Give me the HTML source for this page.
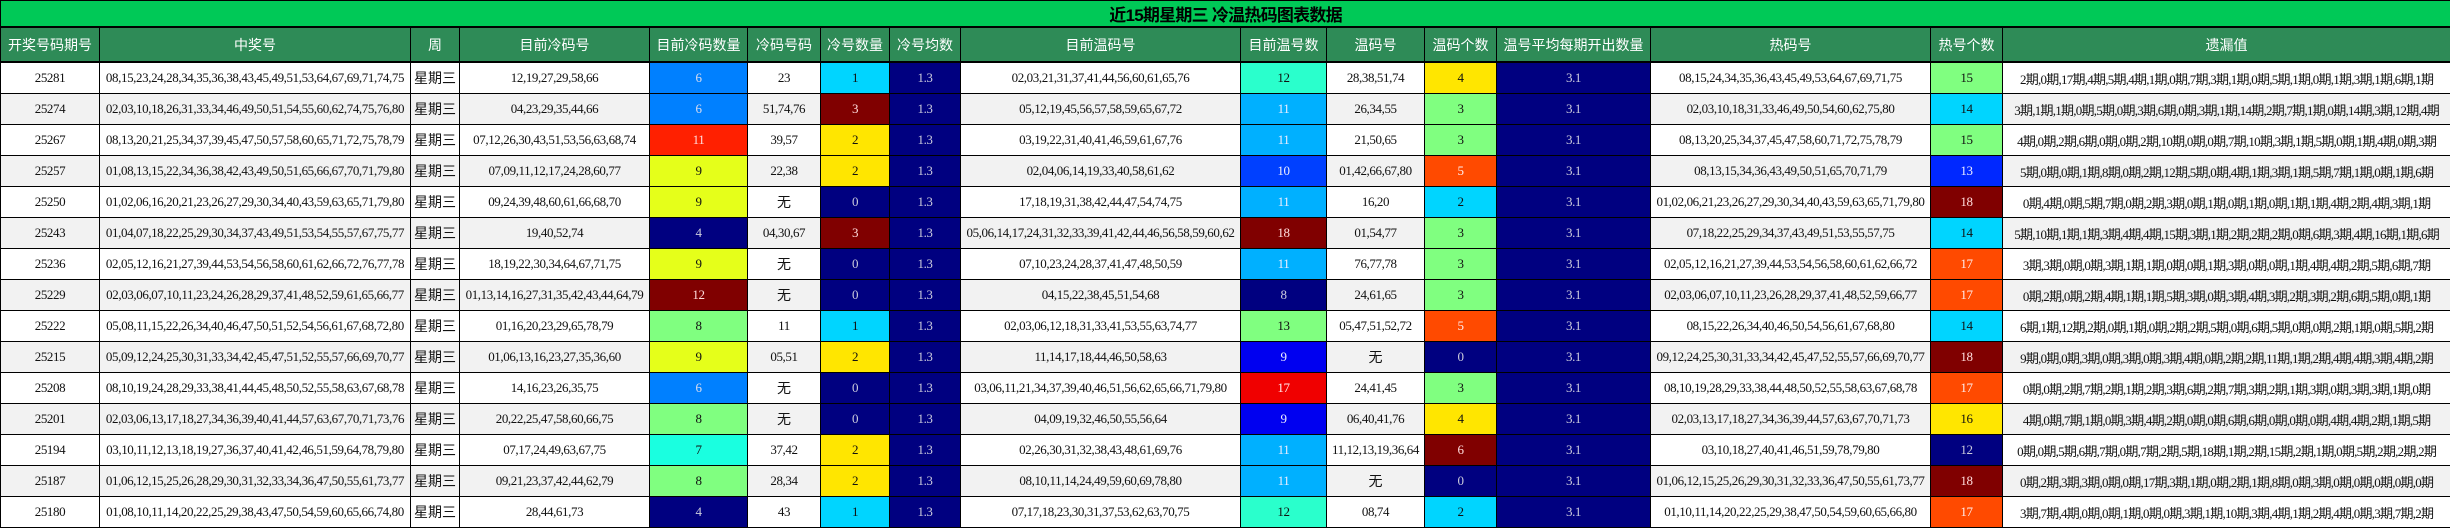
<!DOCTYPE html>
<html><head><meta charset="utf-8">
<style>
html,body{margin:0;padding:0;background:#fff;width:2450px;height:528px;overflow:hidden}
table{border-collapse:collapse;table-layout:fixed;width:2450px}
td,th{border:1px solid #000;padding:0;text-align:center;white-space:nowrap;overflow:hidden}
.t{background:#00c957;height:25px;font:bold 17px "Liberation Sans","Noto Sans CJK SC",sans-serif;color:#000;border-bottom:2px solid #000}
th{background:#2e8b57;color:#fff;height:33px;font:normal 14px "Liberation Sans","Noto Sans CJK SC",sans-serif;border-bottom:2px solid #000}
td{height:30px;font-size:13px;font-family:"Liberation Serif","Noto Sans CJK SC",serif;letter-spacing:-0.4px;color:#111}
td:last-child{letter-spacing:-0.75px}
tr.a td{background:#fff}
tr.b td{background:#f2f2f2}
td.c{font-family:"Liberation Sans","Noto Sans CJK SC",sans-serif;font-size:14px;letter-spacing:0}
tr td.nv{background:#000080;color:#ccd}
tr td.bl{background:#0080ff;color:#dde}
tr td.rd{background:#ff2000;color:#fdd}
tr td.yg{background:#e5ff1a}
tr td.dr{background:#800000;color:#fdd}
tr td.gr{background:#80ff80}
tr td.cy{background:#1affe0}
tr td.sk{background:#00d5ff}
tr td.ye{background:#ffe600}
tr td.aq{background:#2affcc}
tr td.lb{background:#00b0ff;color:#eef}
tr td.b4{background:#0040ff;color:#eef}
tr td.b9{background:#0000f0;color:#eef}
tr td.r7{background:#f00000;color:#fee}
tr td.or{background:#ff4a00;color:#fee}
tr td.b3{background:#0028ff;color:#eef}
</style></head><body>
<table>
<colgroup>
<col style="width:99px"><col style="width:311px"><col style="width:49px"><col style="width:190px"><col style="width:98px"><col style="width:73px"><col style="width:69px"><col style="width:71px"><col style="width:280px"><col style="width:86px"><col style="width:98px"><col style="width:72px"><col style="width:154px"><col style="width:280px"><col style="width:72px"><col style="width:448px">
</colgroup>
<tr><td class="t" colspan="16">近15期星期三 冷温热码图表数据</td></tr>
<tr><th>开奖号码期号</th><th>中奖号</th><th>周</th><th>目前冷码号</th><th>目前冷码数量</th><th>冷码号码</th><th>冷号数量</th><th>冷号均数</th><th>目前温码号</th><th>目前温号数</th><th>温码号</th><th>温码个数</th><th>温号平均每期开出数量</th><th>热码号</th><th>热号个数</th><th>遗漏值</th></tr>

<tr class="a"><td>25281</td><td>08,15,23,24,28,34,35,36,38,43,45,49,51,53,64,67,69,71,74,75</td><td class="c">星期三</td><td>12,19,27,29,58,66</td><td class="bl">6</td><td>23</td><td class="sk">1</td><td class="nv">1.3</td><td>02,03,21,31,37,41,44,56,60,61,65,76</td><td class="aq">12</td><td>28,38,51,74</td><td class="ye">4</td><td class="nv">3.1</td><td>08,15,24,34,35,36,43,45,49,53,64,67,69,71,75</td><td class="gr">15</td><td>2期,0期,17期,4期,5期,4期,1期,0期,7期,3期,1期,0期,5期,1期,0期,1期,3期,1期,6期,1期</td></tr>
<tr class="b"><td>25274</td><td>02,03,10,18,26,31,33,34,46,49,50,51,54,55,60,62,74,75,76,80</td><td class="c">星期三</td><td>04,23,29,35,44,66</td><td class="bl">6</td><td>51,74,76</td><td class="dr">3</td><td class="nv">1.3</td><td>05,12,19,45,56,57,58,59,65,67,72</td><td class="lb">11</td><td>26,34,55</td><td class="gr">3</td><td class="nv">3.1</td><td>02,03,10,18,31,33,46,49,50,54,60,62,75,80</td><td class="sk">14</td><td>3期,1期,1期,0期,5期,0期,3期,6期,0期,3期,1期,14期,2期,7期,1期,0期,14期,3期,12期,4期</td></tr>
<tr class="a"><td>25267</td><td>08,13,20,21,25,34,37,39,45,47,50,57,58,60,65,71,72,75,78,79</td><td class="c">星期三</td><td>07,12,26,30,43,51,53,56,63,68,74</td><td class="rd">11</td><td>39,57</td><td class="ye">2</td><td class="nv">1.3</td><td>03,19,22,31,40,41,46,59,61,67,76</td><td class="lb">11</td><td>21,50,65</td><td class="gr">3</td><td class="nv">3.1</td><td>08,13,20,25,34,37,45,47,58,60,71,72,75,78,79</td><td class="gr">15</td><td>4期,0期,2期,6期,0期,0期,2期,10期,0期,0期,7期,10期,3期,1期,5期,0期,1期,4期,0期,3期</td></tr>
<tr class="b"><td>25257</td><td>01,08,13,15,22,34,36,38,42,43,49,50,51,65,66,67,70,71,79,80</td><td class="c">星期三</td><td>07,09,11,12,17,24,28,60,77</td><td class="yg">9</td><td>22,38</td><td class="ye">2</td><td class="nv">1.3</td><td>02,04,06,14,19,33,40,58,61,62</td><td class="b4">10</td><td>01,42,66,67,80</td><td class="or">5</td><td class="nv">3.1</td><td>08,13,15,34,36,43,49,50,51,65,70,71,79</td><td class="b3">13</td><td>5期,0期,0期,1期,8期,0期,2期,12期,5期,0期,4期,1期,3期,1期,5期,7期,1期,0期,1期,6期</td></tr>
<tr class="a"><td>25250</td><td>01,02,06,16,20,21,23,26,27,29,30,34,40,43,59,63,65,71,79,80</td><td class="c">星期三</td><td>09,24,39,48,60,61,66,68,70</td><td class="yg">9</td><td class="c">无</td><td class="nv">0</td><td class="nv">1.3</td><td>17,18,19,31,38,42,44,47,54,74,75</td><td class="lb">11</td><td>16,20</td><td class="sk">2</td><td class="nv">3.1</td><td>01,02,06,21,23,26,27,29,30,34,40,43,59,63,65,71,79,80</td><td class="dr">18</td><td>0期,4期,0期,5期,7期,0期,2期,3期,0期,1期,0期,1期,0期,1期,1期,4期,2期,4期,3期,1期</td></tr>
<tr class="b"><td>25243</td><td>01,04,07,18,22,25,29,30,34,37,43,49,51,53,54,55,57,67,75,77</td><td class="c">星期三</td><td>19,40,52,74</td><td class="nv">4</td><td>04,30,67</td><td class="dr">3</td><td class="nv">1.3</td><td>05,06,14,17,24,31,32,33,39,41,42,44,46,56,58,59,60,62</td><td class="dr">18</td><td>01,54,77</td><td class="gr">3</td><td class="nv">3.1</td><td>07,18,22,25,29,34,37,43,49,51,53,55,57,75</td><td class="sk">14</td><td>5期,10期,1期,1期,3期,4期,4期,15期,3期,1期,2期,2期,2期,0期,6期,3期,4期,16期,1期,6期</td></tr>
<tr class="a"><td>25236</td><td>02,05,12,16,21,27,39,44,53,54,56,58,60,61,62,66,72,76,77,78</td><td class="c">星期三</td><td>18,19,22,30,34,64,67,71,75</td><td class="yg">9</td><td class="c">无</td><td class="nv">0</td><td class="nv">1.3</td><td>07,10,23,24,28,37,41,47,48,50,59</td><td class="lb">11</td><td>76,77,78</td><td class="gr">3</td><td class="nv">3.1</td><td>02,05,12,16,21,27,39,44,53,54,56,58,60,61,62,66,72</td><td class="or">17</td><td>3期,3期,0期,0期,3期,1期,1期,0期,0期,1期,3期,0期,0期,1期,4期,4期,2期,5期,6期,7期</td></tr>
<tr class="b"><td>25229</td><td>02,03,06,07,10,11,23,24,26,28,29,37,41,48,52,59,61,65,66,77</td><td class="c">星期三</td><td>01,13,14,16,27,31,35,42,43,44,64,79</td><td class="dr">12</td><td class="c">无</td><td class="nv">0</td><td class="nv">1.3</td><td>04,15,22,38,45,51,54,68</td><td class="nv">8</td><td>24,61,65</td><td class="gr">3</td><td class="nv">3.1</td><td>02,03,06,07,10,11,23,26,28,29,37,41,48,52,59,66,77</td><td class="or">17</td><td>0期,2期,0期,2期,4期,1期,1期,5期,3期,0期,3期,4期,3期,2期,3期,2期,6期,5期,0期,1期</td></tr>
<tr class="a"><td>25222</td><td>05,08,11,15,22,26,34,40,46,47,50,51,52,54,56,61,67,68,72,80</td><td class="c">星期三</td><td>01,16,20,23,29,65,78,79</td><td class="gr">8</td><td>11</td><td class="sk">1</td><td class="nv">1.3</td><td>02,03,06,12,18,31,33,41,53,55,63,74,77</td><td class="gr">13</td><td>05,47,51,52,72</td><td class="or">5</td><td class="nv">3.1</td><td>08,15,22,26,34,40,46,50,54,56,61,67,68,80</td><td class="sk">14</td><td>6期,1期,12期,2期,0期,1期,0期,2期,2期,5期,0期,6期,5期,0期,0期,2期,1期,0期,5期,2期</td></tr>
<tr class="b"><td>25215</td><td>05,09,12,24,25,30,31,33,34,42,45,47,51,52,55,57,66,69,70,77</td><td class="c">星期三</td><td>01,06,13,16,23,27,35,36,60</td><td class="yg">9</td><td>05,51</td><td class="ye">2</td><td class="nv">1.3</td><td>11,14,17,18,44,46,50,58,63</td><td class="b9">9</td><td class="c">无</td><td class="nv">0</td><td class="nv">3.1</td><td>09,12,24,25,30,31,33,34,42,45,47,52,55,57,66,69,70,77</td><td class="dr">18</td><td>9期,0期,0期,3期,0期,3期,0期,3期,4期,0期,2期,2期,11期,1期,2期,4期,4期,3期,4期,2期</td></tr>
<tr class="a"><td>25208</td><td>08,10,19,24,28,29,33,38,41,44,45,48,50,52,55,58,63,67,68,78</td><td class="c">星期三</td><td>14,16,23,26,35,75</td><td class="bl">6</td><td class="c">无</td><td class="nv">0</td><td class="nv">1.3</td><td>03,06,11,21,34,37,39,40,46,51,56,62,65,66,71,79,80</td><td class="r7">17</td><td>24,41,45</td><td class="gr">3</td><td class="nv">3.1</td><td>08,10,19,28,29,33,38,44,48,50,52,55,58,63,67,68,78</td><td class="or">17</td><td>0期,0期,2期,7期,2期,1期,2期,3期,6期,2期,7期,3期,2期,1期,3期,0期,3期,3期,1期,0期</td></tr>
<tr class="b"><td>25201</td><td>02,03,06,13,17,18,27,34,36,39,40,41,44,57,63,67,70,71,73,76</td><td class="c">星期三</td><td>20,22,25,47,58,60,66,75</td><td class="gr">8</td><td class="c">无</td><td class="nv">0</td><td class="nv">1.3</td><td>04,09,19,32,46,50,55,56,64</td><td class="b9">9</td><td>06,40,41,76</td><td class="ye">4</td><td class="nv">3.1</td><td>02,03,13,17,18,27,34,36,39,44,57,63,67,70,71,73</td><td class="ye">16</td><td>4期,0期,7期,1期,0期,3期,4期,2期,0期,0期,6期,6期,0期,0期,0期,4期,4期,2期,1期,5期</td></tr>
<tr class="a"><td>25194</td><td>03,10,11,12,13,18,19,27,36,37,40,41,42,46,51,59,64,78,79,80</td><td class="c">星期三</td><td>07,17,24,49,63,67,75</td><td class="cy">7</td><td>37,42</td><td class="ye">2</td><td class="nv">1.3</td><td>02,26,30,31,32,38,43,48,61,69,76</td><td class="lb">11</td><td>11,12,13,19,36,64</td><td class="dr">6</td><td class="nv">3.1</td><td>03,10,18,27,40,41,46,51,59,78,79,80</td><td class="nv">12</td><td>0期,0期,5期,6期,7期,0期,7期,2期,5期,18期,1期,2期,15期,2期,1期,0期,5期,2期,2期,2期</td></tr>
<tr class="b"><td>25187</td><td>01,06,12,15,25,26,28,29,30,31,32,33,34,36,47,50,55,61,73,77</td><td class="c">星期三</td><td>09,21,23,37,42,44,62,79</td><td class="gr">8</td><td>28,34</td><td class="ye">2</td><td class="nv">1.3</td><td>08,10,11,14,24,49,59,60,69,78,80</td><td class="lb">11</td><td class="c">无</td><td class="nv">0</td><td class="nv">3.1</td><td>01,06,12,15,25,26,29,30,31,32,33,36,47,50,55,61,73,77</td><td class="dr">18</td><td>0期,2期,3期,3期,0期,0期,17期,3期,1期,0期,2期,1期,8期,0期,3期,0期,0期,0期,0期,0期</td></tr>
<tr class="a"><td>25180</td><td>01,08,10,11,14,20,22,25,29,38,43,47,50,54,59,60,65,66,74,80</td><td class="c">星期三</td><td>28,44,61,73</td><td class="nv">4</td><td>43</td><td class="sk">1</td><td class="nv">1.3</td><td>07,17,18,23,30,31,37,53,62,63,70,75</td><td class="aq">12</td><td>08,74</td><td class="sk">2</td><td class="nv">3.1</td><td>01,10,11,14,20,22,25,29,38,47,50,54,59,60,65,66,80</td><td class="or">17</td><td>3期,7期,4期,0期,0期,1期,0期,0期,3期,1期,10期,3期,4期,1期,2期,4期,0期,3期,7期,2期</td></tr>
</table>
</body></html>
